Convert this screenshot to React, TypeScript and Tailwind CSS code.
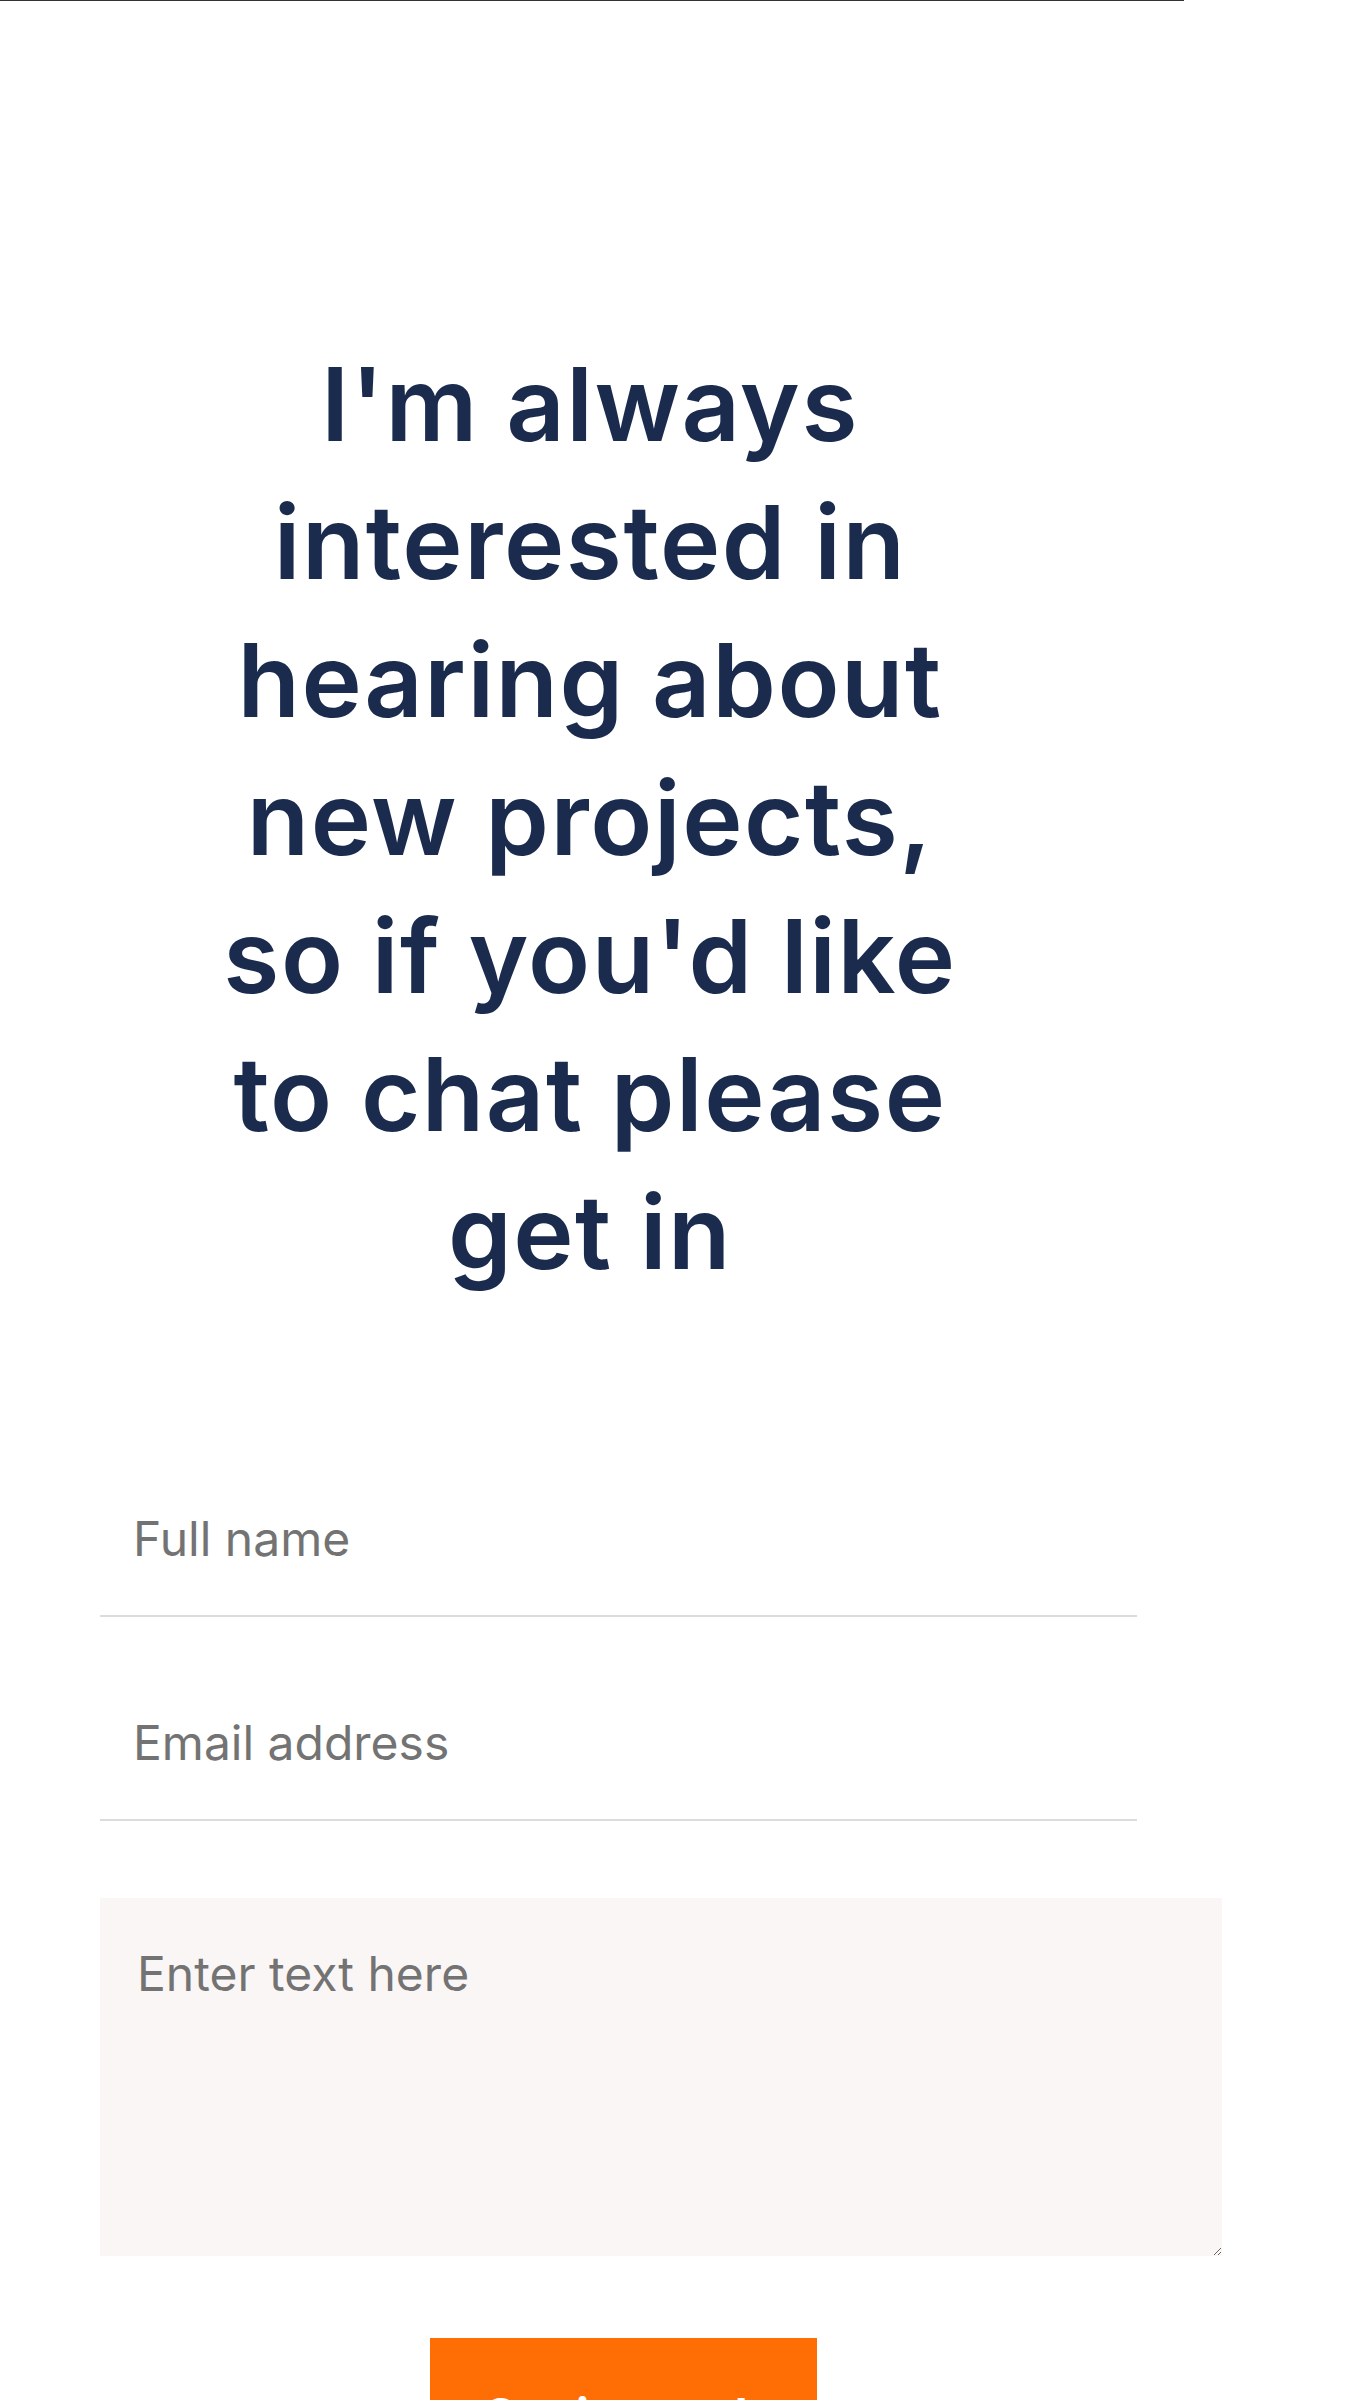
export default function App() {
  return (
    <div className="min-h-screen w-full bg-white font-['Inter','Liberation_Sans',sans-serif]">
      {/* top rule */}
      <div className="h-px w-[1184px] bg-[#333333]" />

      <div className="w-[1180px]">
        <h1 className="mx-auto mt-[334px] w-[770px] text-center text-[102px] font-semibold leading-[138px] tracking-[0.015em] text-[#1a2b4d]">
          I'm always interested in hearing about new projects, so if you'd like to chat please get in
        </h1>
      </div>

      <form className="ml-[100px] mt-[160px] flex w-[1047px] flex-col" onSubmit={(e) => e.preventDefault()}>
        <input
          type="text"
          placeholder="Full name"
          className="block h-[156px] w-[1037px] border-b-2 border-[#dcdcdc] bg-transparent px-[33px] text-[48px] text-[#333] outline-none placeholder:text-[#737373]"
        />
        <input
          type="email"
          placeholder="Email address"
          className="mt-[48px] block h-[156px] w-[1037px] border-b-2 border-[#dcdcdc] bg-transparent px-[33px] text-[48px] text-[#333] outline-none placeholder:text-[#737373]"
        />
        <textarea
          placeholder="Enter text here"
          className="mt-[77px] block h-[358px] w-[1122px] max-w-none bg-[#faf6f5] pl-[37px] pr-[20px] pt-[40px] text-[48px] text-[#333] outline-none placeholder:text-[#737373]"
        />
        <button
          type="submit"
          className="mx-auto mt-[82px] block w-[387px] bg-[#ff6d05] py-[42px] text-center text-[48px] font-bold text-white"
        >
          Get in touch
        </button>
      </form>
    </div>
  );
}
